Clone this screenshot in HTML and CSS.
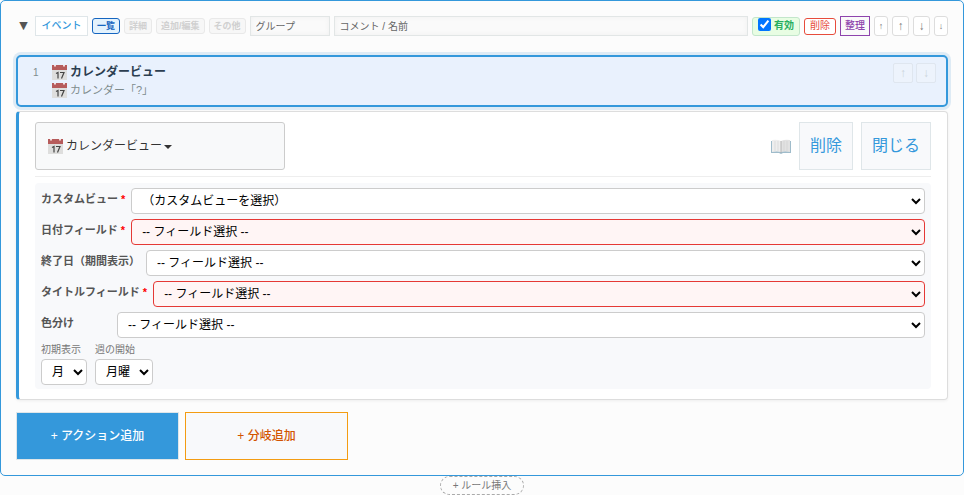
FILE: index.html
```html
<!DOCTYPE html>
<html lang="ja">
<head>
<meta charset="utf-8">
<title>ルール編集</title>
<link rel="stylesheet" href="styles.css">
</head>
<body>
<svg class="defs" aria-hidden="true">
  <symbol id="calendar" viewBox="0 0 15 15">
    <path d="M0 4h15v11H0z" fill="#dededd"/>
    <path d="M0 0h15v5H0z" fill="#b65b5b"/>
    <path d="M2 0h2v1.500H2zM11 0h2v1.500h-2z" fill="#f3dddd"/>
    <path d="M4 8.500l2-1v6M8 7.500h4l-2.500 6" fill="none" stroke="#444" stroke-width="1.200"/>
  </symbol>
</svg>
<main class="rule">
  <div class="toolbar">
    <button class="toggle" aria-label="折りたたむ">▼</button>
    <button class="event">イベント</button>
    <button class="tag tag-on">一覧</button>
    <button class="tag">詳細</button>
    <button class="tag">追加/編集</button>
    <button class="tag">その他</button>
    <input class="text group" type="text" placeholder="グループ" aria-label="グループ">
    <input class="text comment" type="text" placeholder="コメント / 名前" aria-label="コメント / 名前">
    <label class="enabled"><input type="checkbox" checked>有効</label>
    <button class="delete">削除</button>
    <button class="tidy">整理</button>
    <button class="move small">↑</button>
    <button class="move">↑</button>
    <button class="move">↓</button>
    <button class="move small">↓</button>
  </div>

  <section class="step">
    <span class="number">1</span>
    <div class="summary">
      <div class="title"><svg class="cal"><use href="#calendar"/></svg>カレンダービュー</div>
      <div class="detail"><svg class="cal"><use href="#calendar"/></svg>カレンダー「?」</div>
    </div>
    <button class="shift" disabled>↑</button>
    <button class="shift" disabled>↓</button>
  </section>

  <section class="panel">
    <header class="panel-head">
      <button class="type"><svg class="cal"><use href="#calendar"/></svg>カレンダービュー<span class="caret"></span></button>
      <a class="help" href="#help" aria-label="ヘルプ">
        <svg class="book" viewBox="0 0 20 15">
          <path d="M0 2h20v12h-8l-2 1-2-1H0z" fill="#9fbccb"/>
          <path d="M1 1q5-1 9 1v11q-4-1-9 0z" fill="#eeeeee"/>
          <path d="M19 1q-5-1-9 1v11q4-1 9 0z" fill="#e2e2e2"/>
          <path d="M4 2v10M7 2v10M13 2v10M16 2v10" stroke="#d0d0d0" stroke-width=".6"/>
          <path d="M10 2v12" stroke="#aaa" stroke-width=".8"/>
        </svg>
      </a>
      <button class="big">削除</button>
      <button class="big">閉じる</button>
    </header>
    <div class="fields">
      <div class="row">
        <label for="view">カスタムビュー <b>*</b></label>
        <select id="view"><option>（カスタムビューを選択）</option></select>
      </div>
      <div class="row">
        <label for="date">日付フィールド <b>*</b></label>
        <select id="date" class="invalid"><option>-- フィールド選択 --</option></select>
      </div>
      <div class="row">
        <label for="end">終了日（期間表示）</label>
        <select id="end"><option>-- フィールド選択 --</option></select>
      </div>
      <div class="row">
        <label for="name">タイトルフィールド <b>*</b></label>
        <select id="name" class="invalid"><option>-- フィールド選択 --</option></select>
      </div>
      <div class="row">
        <label for="color">色分け</label>
        <select id="color"><option>-- フィールド選択 --</option></select>
      </div>
      <div class="options">
        <div class="option">
          <label for="initial">初期表示</label>
          <select id="initial"><option>月</option></select>
        </div>
        <div class="option">
          <label for="week">週の開始</label>
          <select id="week"><option>月曜</option></select>
        </div>
      </div>
    </div>
  </section>

  <div class="actions">
    <button class="add">+ アクション追加</button>
    <button class="add branch">+ 分岐追加</button>
  </div>
</main>
<div class="insert"><button>+ ルール挿入</button></div>
</body>
</html>
```
FILE: styles.css
```css
* { box-sizing: border-box; }
body {
  margin: 0;
  background: #fcfcfc;
  color: #333;
  font: 12px/16px "Liberation Sans", "Noto Sans CJK JP", sans-serif;
}
button, input, select { font: inherit; margin: 0; }
button { padding: 0; white-space: nowrap; }
.defs { position: absolute; width: 0; height: 0; }
.rule {
  border: 1px solid #3498db;
  border-radius: 5px;
  padding: 15px;
}

.toolbar { display: flex; align-items: center; gap: 4px; height: 20px; }
.toggle {
  width: 15px;
  border: 0;
  background: none;
  color: #555;
  font-family: "DejaVu Sans", sans-serif;
  font-size: 11px;
}
.event {
  width: 53px;
  height: 20px;
  border: 1px solid #dfe6e9;
  background: #fff;
  color: #3498db;
  font-size: 10px;
  font-weight: 500;
}
.tag {
  height: 16px;
  padding: 0 4px;
  border: 1px solid #e9e9e9;
  border-radius: 3px;
  background: #f7f7f7;
  color: #d0d0d0;
  font-size: 9px;
  font-weight: bold;
  line-height: 14px;
}
.tag-on { border-color: #1565c0; background: #e3f2fd; color: #1565c0; }
.text {
  height: 20px;
  min-width: 0;
  padding: 0 5px;
  border: 1px solid #e2e6e6;
  border-radius: 0;
  background: #fafafa;
  box-shadow: inset 0 0 5px #f0f0f0;
  font-size: 10px;
}
.text::placeholder { color: #666; }
.group { width: 80px; }
.comment { flex: 1; }
.enabled {
  display: flex;
  align-items: center;
  gap: 3px;
  height: 19px;
  padding: 0 5px;
  border: 1px solid #c3e6cb;
  border-radius: 3px;
  background: #e8fde3;
  color: #27ae60;
  font-size: 10px;
  font-weight: bold;
}
.enabled input { width: 13px; height: 13px; margin: 0 0 3px; accent-color: #0075ff; }
.delete {
  width: 32px;
  height: 17px;
  border: 1px solid #e74c3c;
  border-radius: 3px;
  background: #fff;
  color: #e74c3c;
  font-size: 10px;
  line-height: 14px;
}
.tidy {
  width: 30px;
  height: 20px;
  border: 1px solid #8e44ad;
  background: #fafafa;
  color: #8e44ad;
  font-size: 10px;
  font-weight: 500;
}
.move {
  width: 17px;
  height: 20px;
  border: 1px solid #ddd;
  border-radius: 3px;
  background: #fff;
  color: #777;
  font: 12px "Liberation Sans", sans-serif;
}
.move.small { width: 14px; font-size: 9px; }

.step {
  display: flex;
  align-items: flex-start;
  gap: 3px;
  height: 52px;
  margin-top: 19px;
  padding: 6px 10px 6px 15px;
  border: 2px solid #3498db;
  border-radius: 5px;
  background: #e9f1fd;
  box-shadow: 0 0 0 3px #deebf5;
}
.number { width: 16px; padding-top: 2px; color: #7f8c8d; font-size: 10px; }
.summary { flex: 1; }
.title, .detail { display: flex; align-items: center; height: 18px; }
.title { color: #2c3e50; font-weight: bold; }
.detail { color: #7f8c8d; font-size: 11px; }
.cal { width: 15px; height: 15px; margin-right: 3px; flex: none; }
.shift {
  width: 20px;
  height: 20px;
  border: 1px solid #dfe6ef;
  border-radius: 2px;
  background: #edf3fc;
  color: #ccd3db;
  font: 12px "Liberation Sans", sans-serif;
}

.panel {
  margin-top: 4px;
  padding: 10px 16px;
  border: 1px solid #ddd;
  border-left: 3px solid #3498db;
  border-radius: 4px;
  background: #fff;
  box-shadow: 0 1px 3px #eee;
}
.panel-head {
  display: flex;
  align-items: center;
  gap: 8px;
  padding-bottom: 6px;
  border-bottom: 1px solid #eee;
}
.type {
  display: flex;
  align-items: center;
  width: 250px;
  height: 48px;
  padding: 0 12px;
  border: 1px solid #ccc;
  border-radius: 3px;
  background: #f8f9fa;
  color: #333;
}
.caret {
  margin: 2px 0 0 2px;
  border: 4px solid transparent;
  border-top-color: #333;
  border-bottom: 0;
}
.help { display: flex; margin-left: auto; }
.book { width: 20px; height: 15px; }
.big {
  height: 48px;
  padding: 0 10px;
  border: 1px solid #dfe6e9;
  background: #f8f9fb;
  color: #3498db;
  font-size: 16px;
}
.fields {
  display: grid;
  gap: 5px;
  margin-top: 6px;
  padding: 5px 6px 4px;
  border-radius: 4px;
  background: #f8f9fb;
}
.row { display: flex; align-items: flex-start; gap: 6px; }
.row label {
  min-width: 70px;
  color: #555;
  font-size: 11px;
  font-weight: bold;
  line-height: 22px;
  white-space: nowrap;
}
.row b { color: #f00; }
select {
  height: 26px;
  border: 1px solid #ccc;
  border-radius: 4px;
  background: #fff;
  color: #000;
  padding: 0 0 0 6px;
}
.row select { flex: 1; min-width: 0; }
select.invalid { border-color: #e53935; background: #fff5f5; }
.options { display: flex; gap: 8px; }
.option { display: flex; flex-direction: column; align-items: flex-start; }
.option label { color: #777; font-size: 10px; line-height: 14px; padding-bottom: 2px; }
#initial { width: 46px; }
#week { width: 58px; }

.actions { display: flex; gap: 6px; margin-top: 12px; }
.add {
  width: 163px;
  height: 48px;
  border: 1px solid #dfe6e9;
  background: #3498db;
  color: #fff;
  font-weight: 500;
}
.branch { border-color: #f39c12; background: #f8f9fb; color: #d35400; }
.insert { display: flex; justify-content: center; }
.insert button {
  width: 84px;
  height: 19px;
  border: 1px dashed #aaa;
  border-radius: 10px;
  background: #fcfcfc;
  color: #777;
  font-size: 10px;
}
```
